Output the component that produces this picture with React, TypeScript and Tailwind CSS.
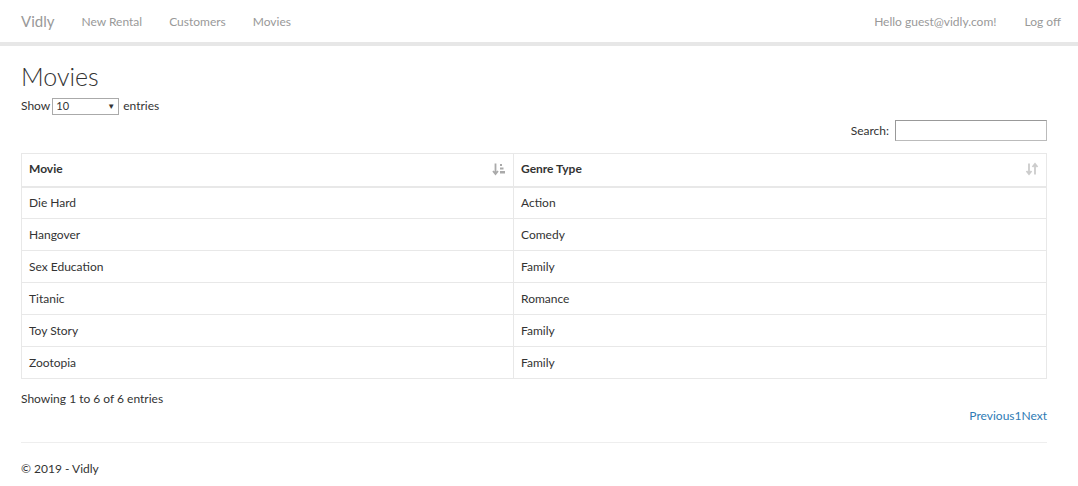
import React from "react";

const rows = [
  ["Die Hard", "Action"],
  ["Hangover", "Comedy"],
  ["Sex Education", "Family"],
  ["Titanic", "Romance"],
  ["Toy Story", "Family"],
  ["Zootopia", "Family"],
];

function SortAsc() {
  return (
    <svg width="14" height="14" viewBox="0 0 14 14" className="text-[#aaa]">
      <path d="M3.5 1.5v10M1 9l2.5 3L6 9" stroke="currentColor" strokeWidth="1.8" fill="none" />
      <rect x="8" y="2" width="2" height="2" fill="currentColor" />
      <rect x="8" y="5.5" width="3.5" height="2" fill="currentColor" />
      <rect x="8" y="9" width="5" height="2.5" fill="currentColor" />
    </svg>
  );
}

function SortBoth() {
  return (
    <svg width="14" height="14" viewBox="0 0 14 14" className="text-[#ccc]">
      <path d="M4 1.5v10M1.5 9l2.5 3 2.5-3" stroke="currentColor" strokeWidth="1.8" fill="none" />
      <path d="M10 12.5v-10M7.5 5l2.5-3 2.5 3" stroke="currentColor" strokeWidth="1.8" fill="none" />
    </svg>
  );
}

export default function App() {
  return (
    <div className="min-h-[486px] bg-white text-[#333] text-[12px]" style={{ fontFamily: "Lato, 'Open Sans', sans-serif" }}>
      <nav className="h-[46px] border-b-[4px] border-[#e7e7e7] flex items-center justify-between px-[21px] pt-[1px]">
        <div className="flex items-center">
          <span className="text-[15px] text-[#999] mr-[27px]">Vidly</span>
          <span className="text-[#999] mr-[27px]">New Rental</span>
          <span className="text-[#999] mr-[27px]">Customers</span>
          <span className="text-[#999]">Movies</span>
        </div>
        <div className="flex items-center">
          <span className="text-[#999] mr-[28px]">Hello guest@vidly.com!</span>
          <span className="text-[#999] -mr-[4px]">Log off</span>
        </div>
      </nav>
      <main className="mx-[21px] w-[1026px]">
        <h1 className="text-[25px] leading-[30px] mt-[15px] text-[#333] font-light">Movies</h1>
        <div className="flex items-center mt-[6px] h-[18px]">
          <span>Show</span>
          <div className="ml-[2px] mr-[4px] w-[67px] h-[17px] border border-[#aaa] flex items-center justify-between px-[3px] text-[11px]">
            <span>10</span>
            <span className="text-[8px] text-[#333]">▼</span>
          </div>
          <span>entries</span>
        </div>
        <div className="flex justify-end items-center mt-[5px] h-[21px]">
          <span className="mr-[6px]">Search:</span>
          <div className="w-[152px] h-[21px] border border-[#bbb] border-t-[#999] border-l-[#999]" />
        </div>
        <table className="w-full mt-[12px] border-collapse border border-[#e8e8e8]">
          <thead>
            <tr className="h-[33px] border-b-[2px] border-[#e8e8e8]">
              <th className="text-left font-bold px-[7px] pb-[2px] border-r border-[#e8e8e8] w-[492px]">
                <div className="flex justify-between items-center">
                  <span>Movie</span>
                  <SortAsc />
                </div>
              </th>
              <th className="text-left font-bold px-[7px] pb-[2px]">
                <div className="flex justify-between items-center">
                  <span>Genre Type</span>
                  <SortBoth />
                </div>
              </th>
            </tr>
          </thead>
          <tbody>
            {rows.map(([m, g]) => (
              <tr key={m} className="h-[32px] border-t border-[#e8e8e8]">
                <td className="px-[7px] border-r border-[#e8e8e8]">{m}</td>
                <td className="px-[7px]">{g}</td>
              </tr>
            ))}
          </tbody>
        </table>
        <div className="mt-[11px] h-[16px]">Showing 1 to 6 of 6 entries</div>
        <div className="flex justify-end h-[18px] mt-[1px]">
          <span className="text-[#2f7bb5]">Previous1Next</span>
        </div>
        <div className="mt-[17px] border-t border-[#eee]" />
        <footer className="mt-[17px]">© 2019 - Vidly</footer>
      </main>
    </div>
  );
}
